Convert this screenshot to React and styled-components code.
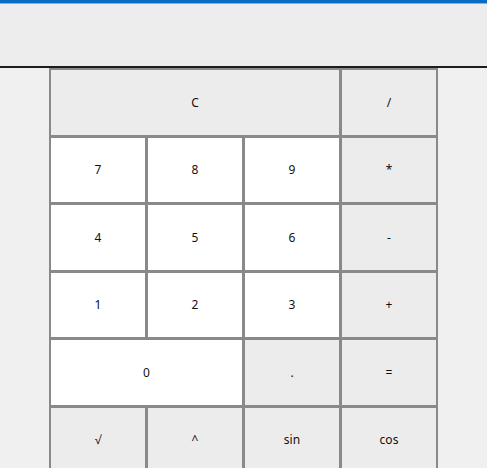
import React from "react";
import styled, { createGlobalStyle } from "styled-components";

const GlobalStyle = createGlobalStyle`
  html, body {
    margin: 0;
    padding: 0;
    background: #f0f0f0;
    overflow: hidden;
  }
  body {
    font-family: "Noto Sans", "Open Sans", sans-serif;
  }
`;

const Window = styled.div`
  width: 487px;
  height: 468px;
  overflow: hidden;
  border-top: 3px solid #0a6cc4;
  box-sizing: border-box;
`;

const Display = styled.div`
  height: 65px;
  background: #ededed;
  border-top: 1px solid #a8a8a8;
  border-bottom: 2px solid #1c1c1c;
  box-sizing: border-box;
`;

const Pad = styled.div`
  display: grid;
  grid-template-columns: repeat(4, 94px);
  grid-auto-rows: 64.5px;
  gap: 3px;
  padding: 2px;
  margin-left: 49px;
  width: max-content;
  background: #898989;
`;

const Key = styled.button`
  grid-column: span ${(p) => p.$span || 1};
  border: none;
  margin: 0;
  padding: 0;
  background: ${(p) => (p.$light ? "#ffffff" : "#ececec")};
  color: #111;
  font-family: "Noto Sans", "Open Sans", sans-serif;
  font-size: 12px;
  display: flex;
  align-items: center;
  justify-content: center;
  cursor: pointer;
`;

const keys = [
  { label: "C", span: 3 },
  { label: "/" },
  { label: "7", light: true },
  { label: "8", light: true },
  { label: "9", light: true },
  { label: "*" },
  { label: "4", light: true },
  { label: "5", light: true },
  { label: "6", light: true },
  { label: "-" },
  { label: "1", light: true },
  { label: "2", light: true },
  { label: "3", light: true },
  { label: "+" },
  { label: "0", span: 2, light: true },
  { label: "." },
  { label: "=" },
  { label: "√" },
  { label: "^" },
  { label: "sin" },
  { label: "cos" },
];

export default function App() {
  return (
    <Window>
      <GlobalStyle />
      <Display />
      <Pad>
        {keys.map((k) => (
          <Key key={k.label} $span={k.span} $light={k.light}>
            {k.label}
          </Key>
        ))}
      </Pad>
    </Window>
  );
}
